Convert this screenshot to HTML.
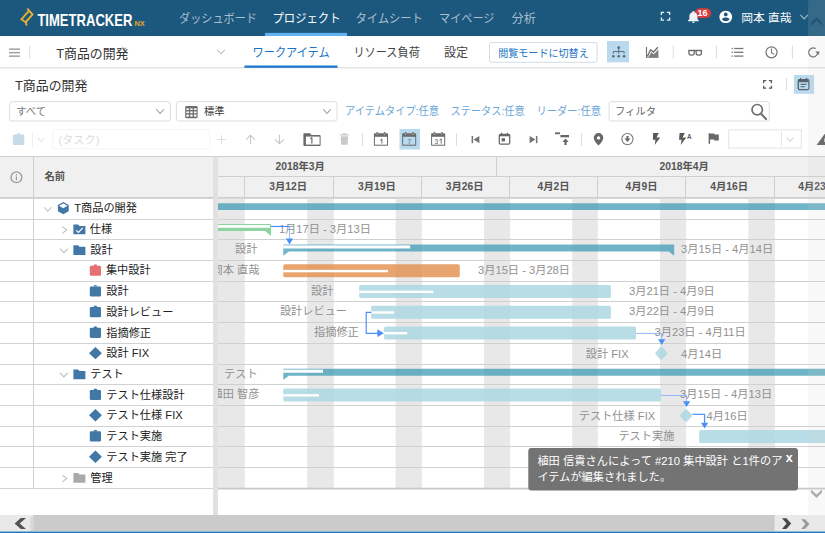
<!DOCTYPE html>
<html lang="ja"><head><meta charset="utf-8"><title>TimeTracker NX</title>
<style>
html,body{margin:0;padding:0;background:#fff;overflow:hidden}
body{width:825px;height:533px;position:relative;font-family:"Liberation Sans",sans-serif}
.t{position:absolute;white-space:nowrap;color:transparent;line-height:1;font-family:"Liberation Sans",sans-serif;pointer-events:none}
#nav{position:absolute;left:0;top:0;width:825px;height:36px;background:#1c587d}
svg.ov{position:absolute;left:0;top:0}
svg.ov text{font-family:"Liberation Sans","Noto Sans CJK JP",sans-serif;white-space:pre}
</style></head><body>
<header id="nav"><span class="t" style="left:37.4px;top:11.4px;font-size:17.1px">TIMETRACKER</span><span class="t" style="left:134.6px;top:19.8px;font-size:7.4px">NX</span><span class="t" style="left:179.5px;top:11.8px;font-size:12.1px">ダッシュボード</span><span class="t" style="left:273.8px;top:11.8px;font-size:12.1px">プロジェクト</span><span class="t" style="left:356.2px;top:11.8px;font-size:12.1px">タイムシート</span><span class="t" style="left:440.0px;top:11.8px;font-size:12.1px">マイページ</span><span class="t" style="left:511.8px;top:11.8px;font-size:12.1px">分析</span><span class="t" style="left:742.0px;top:11.8px;font-size:11.8px">岡本 直哉</span><span class="t" style="left:697.7px;top:8.5px;font-size:9.0px">16</span></header>
<nav id="subnav"><span class="t" style="left:56.2px;top:46.3px;font-size:12.9px">T商品の開発</span><span class="t" style="left:253.8px;top:46.7px;font-size:12.1px">ワークアイテム</span><span class="t" style="left:354.8px;top:46.7px;font-size:12.1px">リソース負荷</span><span class="t" style="left:444.0px;top:46.7px;font-size:12.1px">設定</span><span class="t" style="left:498.8px;top:47.5px;font-size:10.3px">閲覧モードに切替え</span></nav>
<section id="toolbar"><span class="t" style="left:15.0px;top:78.5px;font-size:12.9px">T商品の開発</span><span class="t" style="left:16.2px;top:106.1px;font-size:10.3px">すべて</span><span class="t" style="left:204.0px;top:106.1px;font-size:10.3px">標準</span><span class="t" style="left:345.8px;top:105.6px;font-size:10.9px">アイテムタイプ:任意</span><span class="t" style="left:451.2px;top:105.6px;font-size:10.9px">ステータス:任意</span><span class="t" style="left:537.5px;top:105.6px;font-size:10.9px">リーダー:任意</span><span class="t" style="left:615.5px;top:106.1px;font-size:10.3px">フィルタ</span><span class="t" style="left:58.8px;top:133.7px;font-size:11.2px">(タスク)</span><span class="t" style="left:407.6px;top:137.9px;font-size:6.6px">7</span><span class="t" style="left:434.6px;top:137.9px;font-size:6.6px">3</span><span class="t" style="left:687.1px;top:133.0px;font-size:6.4px">A</span></section>
<section id="gridhead"><span class="t" style="left:44.4px;top:170.8px;font-size:10.3px">名前</span><span class="t" style="left:275.5px;top:161.0px;font-size:10.3px">2018年3月</span><span class="t" style="left:659.5px;top:160.8px;font-size:10.3px">2018年4月</span><span class="t" style="left:269.2px;top:180.8px;font-size:10.3px">3月12日</span><span class="t" style="left:358.0px;top:180.8px;font-size:10.3px">3月19日</span><span class="t" style="left:445.8px;top:180.8px;font-size:10.3px">3月26日</span><span class="t" style="left:537.5px;top:180.8px;font-size:10.3px">4月2日</span><span class="t" style="left:625.6px;top:180.8px;font-size:10.3px">4月9日</span><span class="t" style="left:710.3px;top:180.8px;font-size:10.3px">4月16日</span><span class="t" style="left:798.2px;top:180.8px;font-size:10.3px">4月23日</span></section>
<section id="tree"><span class="t" style="left:74.2px;top:202.5px;font-size:11.2px">T商品の開発</span><span class="t" style="left:89.8px;top:223.2px;font-size:11.2px">仕様</span><span class="t" style="left:90.2px;top:243.9px;font-size:11.2px">設計</span><span class="t" style="left:105.9px;top:264.6px;font-size:11.2px">集中設計</span><span class="t" style="left:106.3px;top:285.3px;font-size:11.2px">設計</span><span class="t" style="left:106.3px;top:306.0px;font-size:11.2px">設計レビュー</span><span class="t" style="left:106.3px;top:326.7px;font-size:11.2px">指摘修正</span><span class="t" style="left:106.3px;top:347.4px;font-size:11.2px">設計 FIX</span><span class="t" style="left:90.2px;top:368.1px;font-size:11.2px">テスト</span><span class="t" style="left:106.3px;top:388.8px;font-size:11.2px">テスト仕様設計</span><span class="t" style="left:106.3px;top:409.6px;font-size:11.2px">テスト仕様 FIX</span><span class="t" style="left:106.3px;top:430.3px;font-size:11.2px">テスト実施</span><span class="t" style="left:106.3px;top:451.0px;font-size:11.2px">テスト実施 完了</span><span class="t" style="left:90.2px;top:471.7px;font-size:11.2px">管理</span></section>
<main id="gantt"><span class="t" style="left:278.9px;top:222.8px;font-size:11.2px">1月17日 - 3月13日</span><span class="t" style="left:235.1px;top:243.5px;font-size:11.2px">設計</span><span class="t" style="left:681.1px;top:243.5px;font-size:11.2px">3月15日 - 4月14日</span><span class="t" style="left:211.6px;top:264.2px;font-size:11.2px">岡本 直哉</span><span class="t" style="left:478.0px;top:264.2px;font-size:11.2px">3月15日 - 3月28日</span><span class="t" style="left:311.0px;top:284.9px;font-size:11.2px">設計</span><span class="t" style="left:629.0px;top:284.9px;font-size:11.2px">3月21日 - 4月9日</span><span class="t" style="left:279.9px;top:305.6px;font-size:11.2px">設計レビュー</span><span class="t" style="left:629.0px;top:305.6px;font-size:11.2px">3月22日 - 4月9日</span><span class="t" style="left:314.0px;top:326.3px;font-size:11.2px">指摘修正</span><span class="t" style="left:654.5px;top:326.3px;font-size:11.2px">3月23日 - 4月11日</span><span class="t" style="left:585.8px;top:348.0px;font-size:11.2px">設計 FIX</span><span class="t" style="left:681.1px;top:348.0px;font-size:11.2px">4月14日</span><span class="t" style="left:224.0px;top:367.7px;font-size:11.2px">テスト</span><span class="t" style="left:211.6px;top:388.4px;font-size:11.2px">植田 智彦</span><span class="t" style="left:680.1px;top:388.4px;font-size:11.2px">3月15日 - 4月13日</span><span class="t" style="left:578.8px;top:410.2px;font-size:11.2px">テスト仕様 FIX</span><span class="t" style="left:706.6px;top:410.2px;font-size:11.2px">4月16日</span><span class="t" style="left:618.4px;top:429.9px;font-size:11.2px">テスト実施</span></main>
<aside id="toast"><span class="t" style="left:537.4px;top:455.2px;font-size:11.2px">植田 信貴さんによって #210 集中設計 と1件のア</span><span class="t" style="left:537.4px;top:470.7px;font-size:11.2px">イテムが編集されました。</span><span class="t" style="left:785.7px;top:450.7px;font-size:12.6px">x</span></aside>

<svg class="ov" width="825" height="533" viewBox="0 0 825 533">
<rect x="0.00" y="0.00" width="825.00" height="36.00" fill="#1c587d"/>
<rect x="265.00" y="32.90" width="82.00" height="3.10" fill="#62b3f3"/>
<text x="37.4" y="26" font-size="17.1" font-weight="bold" fill="#fff" textLength="95" lengthAdjust="spacingAndGlyphs">TIMETRACKER</text>
<text x="134.4" y="26" font-size="7.4" font-weight="bold" fill="#e3a62f">NX</text>
<text x="179" y="22.5" font-size="12.1" fill="#a9bfce" textLength="78" lengthAdjust="spacingAndGlyphs">ダッシュボード</text>
<text x="272.5" y="22.5" font-size="12.1" fill="#fff" textLength="68" lengthAdjust="spacingAndGlyphs">プロジェクト</text>
<text x="355.4" y="22.5" font-size="12.1" fill="#a9bfce" textLength="67.5" lengthAdjust="spacingAndGlyphs">タイムシート</text>
<text x="439" y="22.5" font-size="12.1" fill="#a9bfce" textLength="55.5" lengthAdjust="spacingAndGlyphs">マイページ</text>
<text x="511.6" y="22.5" font-size="12.1" fill="#a9bfce">分析</text>
<text x="741.2" y="22.18" font-size="11.8" fill="#fff">岡本 直哉</text>
<rect x="694.7" y="8.3" width="16.5" height="9.6" rx="4.8" fill="#d63c3f"/>
<text x="697.6" y="16.42" font-size="9" font-weight="bold" fill="#fff">16</text>
<rect x="0.00" y="36.00" width="825.00" height="32.00" fill="#fff"/>
<rect x="0.00" y="67.00" width="825.00" height="1.00" fill="#e2e2e2"/>
<rect x="0.00" y="68.00" width="825.00" height="1.00" fill="#f3f3f3"/>
<rect x="9.00" y="48.40" width="11.00" height="1.50" fill="#a2a2a2"/>
<rect x="9.00" y="51.90" width="11.00" height="1.50" fill="#a2a2a2"/>
<rect x="9.00" y="55.40" width="11.00" height="1.50" fill="#a2a2a2"/>
<rect x="29.20" y="46.00" width="1.00" height="13.00" fill="#dcdcdc"/>
<text x="56.2" y="57.65" font-size="12.9" fill="#333">T商品の開発</text>
<text x="252.6" y="57.35" font-size="12.1" fill="#1a73c4" textLength="77" lengthAdjust="spacingAndGlyphs">ワークアイテム</text>
<rect x="244.40" y="65.50" width="93.10" height="2.30" fill="#1b78cd"/>
<text x="353.4" y="57.35" font-size="12.1" fill="#444" textLength="66.5" lengthAdjust="spacingAndGlyphs">リソース負荷</text>
<text x="444" y="57.35" font-size="12.1" fill="#444">設定</text>
<rect x="489.50" y="42.50" width="107.60" height="19.80" rx="2" fill="#fff" stroke="#d0dce7" stroke-width="1"/>
<text x="498.2" y="56.51" font-size="10.3" fill="#1a73c4" textLength="90.5" lengthAdjust="spacingAndGlyphs">閲覧モードに切替え</text>
<rect x="607.00" y="41.00" width="22.00" height="21.40" fill="#b9d9ef"/>
<rect x="672.80" y="45.70" width="1.00" height="12.80" fill="#dcdcdc"/>
<rect x="716.00" y="45.70" width="1.00" height="12.80" fill="#dcdcdc"/>
<rect x="791.90" y="45.70" width="1.00" height="12.80" fill="#dcdcdc"/>
<text x="15" y="89.9" font-size="12.9" fill="#333">T商品の開発</text>
<rect x="786.00" y="78.10" width="1.00" height="12.40" fill="#dcdcdc"/>
<rect x="794.00" y="75.00" width="20.10" height="18.80" fill="#b9d9ef"/>
<rect x="9.70" y="101.70" width="160.60" height="19.30" rx="2.2" fill="#fff" stroke="#dddddd" stroke-width="1"/>
<text x="16.2" y="115.21" font-size="10.3" fill="#777">すべて</text>
<rect x="176.40" y="101.70" width="160.60" height="19.30" rx="2.2" fill="#fff" stroke="#dddddd" stroke-width="1"/>
<text x="204" y="115.21" font-size="10.3" fill="#333">標準</text>
<text x="345" y="115.24" font-size="10.9" fill="#6ba6d6" textLength="94" lengthAdjust="spacingAndGlyphs">アイテムタイプ:任意</text>
<text x="450.6" y="115.24" font-size="10.9" fill="#6ba6d6" textLength="74" lengthAdjust="spacingAndGlyphs">ステータス:任意</text>
<text x="536.5" y="115.24" font-size="10.9" fill="#6ba6d6" textLength="64.5" lengthAdjust="spacingAndGlyphs">リーダー:任意</text>
<rect x="609.10" y="101.70" width="160.20" height="19.30" rx="2.2" fill="#fff" stroke="#dddddd" stroke-width="1"/>
<text x="615" y="115.21" font-size="10.3" fill="#666">フィルタ</text>
<rect x="32.00" y="132.00" width="1.00" height="15.00" fill="#f0f0f0"/>
<rect x="52.70" y="129.40" width="157.20" height="19.40" rx="1" fill="#fff" stroke="#f4f4f4" stroke-width="1"/>
<text x="58.4" y="143.56" font-size="11.2" fill="#dcdcdc">(タスク)</text>
<rect x="362.00" y="133.00" width="1.00" height="12.75" fill="#dcdcdc"/>
<rect x="399.50" y="129.00" width="20.50" height="20.50" fill="#b9d9ef"/>
<rect x="456.00" y="133.00" width="1.00" height="12.75" fill="#dcdcdc"/>
<rect x="581.00" y="133.00" width="1.00" height="12.75" fill="#dcdcdc"/>
<rect x="728.70" y="129.80" width="72.60" height="18.30" rx="0" fill="#fff" stroke="#e4e4e4" stroke-width="1"/>
<rect x="781.10" y="131.20" width="0.90" height="15.00" fill="#e4e4e4"/>
<rect x="0.00" y="156.00" width="825.00" height="42.40" fill="#f0f0f0"/>
<rect x="0.00" y="156.00" width="825.00" height="1.00" fill="#cfcfcf"/>
<rect x="0.00" y="197.00" width="825.00" height="1.80" fill="#cdcdcd"/>
<rect x="218.00" y="176.00" width="607.00" height="1.00" fill="#cfcfcf"/>
<rect x="496.00" y="156.00" width="1.00" height="20.50" fill="#cfcfcf"/>
<rect x="244.00" y="176.50" width="1.00" height="21.00" fill="#cfcfcf"/>
<rect x="333.00" y="176.50" width="1.00" height="21.00" fill="#cfcfcf"/>
<rect x="421.00" y="176.50" width="1.00" height="21.00" fill="#cfcfcf"/>
<rect x="509.00" y="176.50" width="1.00" height="21.00" fill="#cfcfcf"/>
<rect x="597.00" y="176.50" width="1.00" height="21.00" fill="#cfcfcf"/>
<rect x="685.00" y="176.50" width="1.00" height="21.00" fill="#cfcfcf"/>
<rect x="774.00" y="176.50" width="1.00" height="21.00" fill="#cfcfcf"/>
<text x="44.4" y="179.91" font-size="10.3" font-weight="bold" fill="#555">名前</text>
<text x="275.5" y="170.11" font-size="10.3" font-weight="bold" fill="#555">2018年3月</text>
<text x="659.5" y="169.91" font-size="10.3" font-weight="bold" fill="#555">2018年4月</text>
<text x="269.2" y="189.81" font-size="10.3" font-weight="bold" fill="#555">3月12日</text>
<text x="358" y="189.81" font-size="10.3" font-weight="bold" fill="#555">3月19日</text>
<text x="445.8" y="189.81" font-size="10.3" font-weight="bold" fill="#555">3月26日</text>
<text x="537.5" y="189.81" font-size="10.3" font-weight="bold" fill="#555">4月2日</text>
<text x="625.6" y="189.81" font-size="10.3" font-weight="bold" fill="#555">4月9日</text>
<text x="710.3" y="189.81" font-size="10.3" font-weight="bold" fill="#555">4月16日</text>
<text x="798.2" y="189.81" font-size="10.3" font-weight="bold" fill="#555">4月23日</text>
<rect x="218.00" y="198.80" width="26.80" height="289.70" fill="#e8e8e8"/>
<rect x="307.20" y="198.80" width="26.60" height="289.70" fill="#e8e8e8"/>
<rect x="395.60" y="198.80" width="26.30" height="289.70" fill="#e8e8e8"/>
<rect x="483.90" y="198.80" width="26.10" height="289.70" fill="#e8e8e8"/>
<rect x="572.20" y="198.80" width="25.70" height="289.70" fill="#e8e8e8"/>
<rect x="660.10" y="198.80" width="25.90" height="289.70" fill="#e8e8e8"/>
<rect x="748.40" y="198.80" width="26.50" height="289.70" fill="#e8e8e8"/>
<rect x="0.00" y="219.00" width="213.00" height="1.00" fill="#d2d2d2"/>
<rect x="218.00" y="219.00" width="607.00" height="1.00" fill="#d0d0d0"/>
<rect x="0.00" y="239.00" width="213.00" height="1.00" fill="#d2d2d2"/>
<rect x="218.00" y="239.00" width="607.00" height="1.00" fill="#d0d0d0"/>
<rect x="0.00" y="260.00" width="213.00" height="1.00" fill="#d2d2d2"/>
<rect x="218.00" y="260.00" width="607.00" height="1.00" fill="#d0d0d0"/>
<rect x="0.00" y="281.00" width="213.00" height="1.00" fill="#d2d2d2"/>
<rect x="218.00" y="281.00" width="607.00" height="1.00" fill="#d0d0d0"/>
<rect x="0.00" y="301.00" width="213.00" height="1.00" fill="#d2d2d2"/>
<rect x="218.00" y="301.00" width="607.00" height="1.00" fill="#d0d0d0"/>
<rect x="0.00" y="322.00" width="213.00" height="1.00" fill="#d2d2d2"/>
<rect x="218.00" y="322.00" width="607.00" height="1.00" fill="#d0d0d0"/>
<rect x="0.00" y="343.00" width="213.00" height="1.00" fill="#d2d2d2"/>
<rect x="218.00" y="343.00" width="607.00" height="1.00" fill="#d0d0d0"/>
<rect x="0.00" y="364.00" width="213.00" height="1.00" fill="#d2d2d2"/>
<rect x="218.00" y="364.00" width="607.00" height="1.00" fill="#d0d0d0"/>
<rect x="0.00" y="384.00" width="213.00" height="1.00" fill="#d2d2d2"/>
<rect x="218.00" y="384.00" width="607.00" height="1.00" fill="#d0d0d0"/>
<rect x="0.00" y="405.00" width="213.00" height="1.00" fill="#d2d2d2"/>
<rect x="218.00" y="405.00" width="607.00" height="1.00" fill="#d0d0d0"/>
<rect x="0.00" y="426.00" width="213.00" height="1.00" fill="#d2d2d2"/>
<rect x="218.00" y="426.00" width="607.00" height="1.00" fill="#d0d0d0"/>
<rect x="0.00" y="446.00" width="213.00" height="1.00" fill="#d2d2d2"/>
<rect x="218.00" y="446.00" width="607.00" height="1.00" fill="#d0d0d0"/>
<rect x="0.00" y="467.00" width="213.00" height="1.00" fill="#d2d2d2"/>
<rect x="218.00" y="467.00" width="607.00" height="1.00" fill="#d0d0d0"/>
<rect x="0.00" y="488.00" width="213.00" height="1.00" fill="#d2d2d2"/>
<rect x="218.00" y="487.70" width="607.00" height="1.80" fill="#c9c9c9"/>
<rect x="33.00" y="156.00" width="1.00" height="332.50" fill="#d0d0d0"/>
<rect x="213.00" y="156.50" width="5.00" height="358.50" fill="#e1e1e1"/>
<text x="74.2" y="212.32" font-size="11.2" fill="#222">T商品の開発</text>
<text x="89.8" y="233.03" font-size="11.2" fill="#222">仕様</text>
<text x="90.2" y="253.74" font-size="11.2" fill="#222">設計</text>
<text x="105.9" y="274.45" font-size="11.2" fill="#222">集中設計</text>
<text x="106.3" y="295.16" font-size="11.2" fill="#222">設計</text>
<text x="106.3" y="315.87" font-size="11.2" fill="#222">設計レビュー</text>
<text x="106.3" y="336.58" font-size="11.2" fill="#222">指摘修正</text>
<text x="106.3" y="357.29" font-size="11.2" fill="#222">設計 FIX</text>
<text x="90.2" y="378" font-size="11.2" fill="#222">テスト</text>
<text x="106.3" y="398.71" font-size="11.2" fill="#222">テスト仕様設計</text>
<text x="106.3" y="419.42" font-size="11.2" fill="#222">テスト仕様 FIX</text>
<text x="106.3" y="440.13" font-size="11.2" fill="#222">テスト実施</text>
<text x="106.3" y="460.84" font-size="11.2" fill="#222">テスト実施 完了</text>
<text x="90.2" y="481.55" font-size="11.2" fill="#222">管理</text>
<clipPath id="gc"><rect x="218" y="198" width="607" height="292"/></clipPath><g clip-path="url(#gc)">
<path d="M218.00 203.16H825.00V209.96H218.00Z" fill="rgba(64,156,180,0.75)" />
<path d="M218 223.97H271V235.97L265 230.97H218Z" fill="#8fd3a0"/>
<rect x="218.00" y="225.07" width="52.00" height="2.70" fill="#fff" />
<text x="278.9" y="232.63" font-size="11.2" fill="#919191">1月17日 - 3月13日</text>
<text x="235.1" y="253.34" font-size="11.2" fill="#919191">設計</text>
<path d="M283.30 244.58H674.20V255.78L668.60 251.38H288.90L283.30 255.78Z" fill="rgba(64,156,180,0.75)" />
<rect x="283.20" y="245.38" width="127.00" height="3.10" fill="#fff" />
<text x="681.1" y="253.34" font-size="11.2" fill="#919191">3月15日 - 4月14日</text>
<text x="211.6" y="274.05" font-size="11.2" fill="#919191">岡本 直哉</text>
<rect x="283.30" y="264.29" width="176.50" height="13.00" fill="rgba(226,140,72,0.78)" rx="1.5" />
<rect x="283.30" y="269.89" width="104.70" height="2.40" fill="#fff" />
<text x="478" y="274.05" font-size="11.2" fill="#919191">3月15日 - 3月28日</text>
<text x="311" y="294.76" font-size="11.2" fill="#919191">設計</text>
<rect x="359.20" y="285.00" width="251.70" height="13.00" fill="rgba(173,215,226,0.85)" rx="1.5" />
<rect x="359.20" y="290.60" width="74.10" height="2.40" fill="#fff" />
<text x="629" y="294.76" font-size="11.2" fill="#919191">3月21日 - 4月9日</text>
<text x="279.9" y="315.47" font-size="11.2" fill="#919191">設計レビュー</text>
<rect x="371.10" y="305.71" width="239.80" height="13.00" fill="rgba(173,215,226,0.85)" rx="1.5" />
<rect x="371.10" y="311.31" width="23.10" height="2.40" fill="#fff" />
<text x="629" y="315.47" font-size="11.2" fill="#919191">3月22日 - 4月9日</text>
<text x="314" y="336.18" font-size="11.2" fill="#919191">指摘修正</text>
<rect x="384.10" y="326.42" width="251.90" height="13.00" fill="rgba(173,215,226,0.85)" rx="1.5" />
<rect x="384.10" y="332.02" width="23.10" height="2.40" fill="#fff" />
<text x="654.5" y="336.18" font-size="11.2" fill="#919191">3月23日 - 4月11日</text>
<text x="585.8" y="357.89" font-size="11.2" fill="#919191">設計 FIX</text>
<rect x="-4.9" y="-4.9" width="9.8" height="9.8" rx="1.5" fill="rgba(173,215,226,0.85)" transform="translate(661.30,353.33) scale(0.95,1.02) rotate(45)"/>
<text x="681.1" y="357.89" font-size="11.2" fill="#919191">4月14日</text>
<text x="224" y="377.6" font-size="11.2" fill="#919191">テスト</text>
<path d="M283.30 368.84H825.00V375.64H288.90L283.30 380.04Z" fill="rgba(64,156,180,0.75)" />
<rect x="283.20" y="369.64" width="39.80" height="3.10" fill="#fff" />
<text x="211.6" y="398.31" font-size="11.2" fill="#919191">植田 智彦</text>
<rect x="283.30" y="388.55" width="377.70" height="13.00" fill="rgba(173,215,226,0.85)" rx="1.5" />
<rect x="283.30" y="394.15" width="35.70" height="2.40" fill="#fff" />
<text x="680.1" y="398.31" font-size="11.2" fill="#919191">3月15日 - 4月13日</text>
<text x="578.8" y="420.02" font-size="11.2" fill="#919191">テスト仕様 FIX</text>
<rect x="-4.9" y="-4.9" width="9.8" height="9.8" rx="1.5" fill="rgba(173,215,226,0.85)" transform="translate(686.10,415.46) scale(0.95,1.02) rotate(45)"/>
<text x="706.6" y="420.02" font-size="11.2" fill="#919191">4月16日</text>
<text x="618.4" y="439.73" font-size="11.2" fill="#919191">テスト実施</text>
<rect x="699.20" y="429.97" width="130.80" height="13.00" fill="rgba(173,215,226,0.85)" rx="1.5" />
<path d="M271 226.47H289.8" fill="none" stroke="#4d8ffa" stroke-width="1.2"/>
<path d="M289.6 226.47V239.78" fill="none" stroke="#85b1fb" stroke-width="0.9"/>
<path d="M289.50 244.38l-3.6 -5.8h7.2Z" fill="#4d8ffa" />
<path d="M371.5 312.41H366.2V333.42H378" fill="none" stroke="#4d8ffa" stroke-width="1.2"/>
<path d="M383.80 333.22l-6.4 -3.9v7.8Z" fill="#4d8ffa" />
<path d="M636 333.42H661.6V340.33" fill="none" stroke="#85b1fb" stroke-width="0.9"/>
<path d="M661.70 345.03l-3.6 -5.8h7.2Z" fill="#4d8ffa" />
<path d="M661 395.45H686.6V402.46" fill="none" stroke="#85b1fb" stroke-width="0.9"/>
<path d="M686.60 406.96l-3.6 -5.8h7.2Z" fill="#4d8ffa" />
<path d="M692.3 414.36H704.6V424.17" fill="none" stroke="#5895fb" stroke-width="1.4"/>
<path d="M704.60 428.47l-3.6 -5.8h7.2Z" fill="#4d8ffa" />
</g>
<rect x="528.30" y="448.00" width="269.70" height="42.60" fill="#737373" rx="3" />
<text x="537.4" y="465.06" font-size="11.2" fill="#fff" textLength="245" lengthAdjust="spacingAndGlyphs">植田 信貴さんによって #210 集中設計 と1件のア</text>
<text x="537.4" y="480.56" font-size="11.2" fill="#fff">イテムが編集されました。</text>
<text x="785.7" y="461.79" font-size="12.6" font-weight="bold" fill="#fff">x</text>
<rect x="0.00" y="515.00" width="825.00" height="16.60" fill="#cbcbcb" />
<rect x="0.00" y="515.00" width="33.20" height="16.60" fill="#e9e9e9" />
<rect x="30.00" y="517.00" width="3.20" height="14.60" fill="#dadada" />
<rect x="774.60" y="515.00" width="50.40" height="16.60" fill="#e9e9e9" />
<rect x="0.00" y="531.60" width="825.00" height="1.40" fill="#1b78c4" />
<path d="M26 518.1L19.8 523.5L26 528.9H20.8L14.6 523.5L20.8 518.1Z" fill="#555" />
<path d="M782 518.3L786.6 523.6L782 528.9H786.4L791.2 523.6L786.4 518.3Z" fill="#4a4a4a" />
<path d="M801.2 519.3L805.4 524.1L801.2 528.9H805L809.4 524.1L805 519.3Z" fill="#9a9a9a" />
<path d="M27.3 8.6L32.5 14.6L25.9 21.9L26.5 25.6" fill="none" stroke="#ecb12c" stroke-width="1.9" stroke-linejoin="miter"/>
<path d="M28.5 11.4L21.4 19.4L26.0 22.6" fill="none" stroke="#ecb12c" stroke-width="1.8" stroke-linejoin="miter"/>
<g transform="translate(660.70,11.70) scale(0.6857,0.6500) translate(-5,-5)" fill="#e6edf2" ><path d="M7 14H5v5h5v-2H7v-3zm-2-4h2V7h3V5H5v5zm12 7h-3v2h5v-5h-2v3zM14 5v2h3v3h2V5h-5z"/></g>
<g transform="translate(688.00,11.00) scale(0.6750,0.6154) translate(-4,-2.5)" fill="#eef3f6" ><path d="M12 22c1.1 0 2-.9 2-2h-4c0 1.1.89 2 2 2zm6-6v-5c0-3.07-1.64-5.64-4.5-6.32V4c0-.83-.67-1.5-1.5-1.5s-1.5.67-1.5 1.5v.68C7.63 5.36 6 7.92 6 11v5l-2 2v1h16v-1l-2-2z"/></g>
<g transform="translate(719.40,10.70) scale(0.6350,0.6200) translate(-2,-2)" fill="#fff" ><path d="M12 2C6.48 2 2 6.48 2 12s4.48 10 10 10 10-4.48 10-10S17.52 2 12 2zm0 3c1.66 0 3 1.34 3 3s-1.34 3-3 3-3-1.34-3-3 1.34-3 3-3zm0 14.2c-2.5 0-4.71-1.28-6-3.22.03-1.99 4-3.08 6-3.08 1.99 0 5.97 1.09 6 3.08-1.29 1.94-3.5 3.22-6 3.22z"/></g>
<path d="M800.4 14.8L804.2 18.8L808 14.8" fill="none" stroke="#9fb6c6" stroke-width="1.2" />
<path d="M217.2 49.8L221 53.8L224.8 49.8" fill="none" stroke="#bdbdbd" stroke-width="1.1" />
<circle cx="618.7" cy="47.7" r="1.35" fill="#55697c"/>
<path d="M618.7 48.5V53.8 M613.3 53.8V51.5H624.1V53.8" fill="none" stroke="#55697c" stroke-width="0.9" />
<circle cx="613.3" cy="56.3" r="1.3" fill="#55697c"/>
<circle cx="618.7" cy="56.3" r="1.3" fill="#55697c"/>
<circle cx="624.1" cy="56.3" r="1.3" fill="#55697c"/>
<path d="M646.5 47.1V57.3H658.5" fill="none" stroke="#707070" stroke-width="1.1" />
<path d="M648.4 57.2L651.2 52.3L653.8 54.3L658.4 49.6V57.2Z" fill="#7e7e7e" />
<path d="M647.4 56.2L650.6 49.7L653.4 52.0L657.9 47.3" fill="none" stroke="#686868" stroke-width="1.3" />
<path d="M688.9 50.5H694.2V53.0a2.1 2.1 0 0 1-2.1 2.1h-1.1a2.1 2.1 0 0 1-2.1-2.1Z M696.1 50.5H701.4V53.0a2.1 2.1 0 0 1-2.1 2.1h-1.1a2.1 2.1 0 0 1-2.1-2.1Z M688.2 50.5H702.1" fill="none" stroke="#6c6c6c" stroke-width="1.3" />
<rect x="731.60" y="47.85" width="1.30" height="1.30" fill="#777" />
<rect x="734.20" y="47.85" width="9.20" height="1.30" fill="#777" />
<rect x="731.60" y="51.65" width="1.30" height="1.30" fill="#777" />
<rect x="734.20" y="51.65" width="9.20" height="1.30" fill="#777" />
<rect x="731.60" y="55.45" width="1.30" height="1.30" fill="#777" />
<rect x="734.20" y="55.45" width="9.20" height="1.30" fill="#777" />
<circle cx="771.5" cy="52.3" r="5.5" fill="none" stroke="#777" stroke-width="1.25"/>
<path d="M771.5 48.6V52.6L774 54.2" fill="none" stroke="#777" stroke-width="1.1" />
<path d="M817.6 53.2A4.5 4.5 0 1 1 815.6 48.6" fill="none" stroke="#6a6a6a" stroke-width="1.25" />
<path d="M815.2 51.6h4.4l-1.0 3.4Z" fill="#6a6a6a" />
<g transform="translate(763.00,80.00) scale(0.6500,0.6286) translate(-5,-5)" fill="#5a5a5a" ><path d="M7 14H5v5h5v-2H7v-3zm-2-4h2V7h3V5H5v5zm12 7h-3v2h5v-5h-2v3zM14 5v2h3v3h2V5h-5z"/></g>
<rect x="798.3" y="79.6" width="10.6" height="10" rx="1.4" fill="none" stroke="#56626c" stroke-width="1.3"/>
<rect x="798.30" y="79.40" width="10.60" height="2.80" fill="#56626c" />
<rect x="800.10" y="77.90" width="1.20" height="2.10" fill="#56626c" />
<rect x="805.90" y="77.90" width="1.20" height="2.10" fill="#56626c" />
<rect x="800.60" y="83.80" width="6.00" height="1.10" fill="#56626c" />
<rect x="800.60" y="86.20" width="4.20" height="1.00" fill="#56626c" />
<path d="M156.4 109.4L160.1 113.5L163.8 109.4" fill="none" stroke="#9e9e9e" stroke-width="1.1" />
<path d="M323.3 109.4L327 113.5L330.7 109.4" fill="none" stroke="#9e9e9e" stroke-width="1.1" />
<rect x="185.20" y="106.00" width="12.40" height="12.20" fill="#6e6e6e" rx="1.3" />
<rect x="186.40" y="108.40" width="2.50" height="1.60" fill="#fff" />
<rect x="186.40" y="111.40" width="2.50" height="1.80" fill="#fff" />
<rect x="186.40" y="114.60" width="2.50" height="2.00" fill="#fff" />
<rect x="190.20" y="108.40" width="2.40" height="1.60" fill="#fff" />
<rect x="190.20" y="111.40" width="2.40" height="1.80" fill="#fff" />
<rect x="190.20" y="114.60" width="2.40" height="2.00" fill="#fff" />
<rect x="193.90" y="108.40" width="2.60" height="1.60" fill="#fff" />
<rect x="193.90" y="111.40" width="2.60" height="1.80" fill="#fff" />
<rect x="193.90" y="114.60" width="2.60" height="2.00" fill="#fff" />
<circle cx="757.2" cy="109.7" r="5.2" fill="none" stroke="#707070" stroke-width="1.7"/>
<path d="M761.2 113.9L766 118.9" fill="none" stroke="#707070" stroke-width="2.1" stroke-linecap="round"/>
<path d="M14.20 134.50h8.80a1.3 1.3 0 0 1 1.3 1.3v7.90a1.3 1.3 0 0 1-1.3 1.3h-8.80a1.3 1.3 0 0 1-1.3-1.3v-7.90a1.3 1.3 0 0 1 1.3-1.3Z" fill="#c8dae8"/>
<path d="M16.70 134.70a1.9 1.7 0 0 1 3.8 0Z" fill="#c8dae8"/>
<path d="M37.8 138L41 141.4L44.2 138" fill="none" stroke="#e6e6e6" stroke-width="1.1" />
<path d="M221.5 135.2V143.8M217.2 139.5H225.8" fill="none" stroke="#dcdcdc" stroke-width="1.0" />
<path d="M250.5 144V135.4M246.2 139.6L250.5 135.2L254.8 139.6" fill="none" stroke="#c6c6c6" stroke-width="1.1" />
<path d="M279.4 134.8V143.6M275.1 139.4L279.4 143.8L283.7 139.4" fill="none" stroke="#c6c6c6" stroke-width="1.1" />
<path d="M304.4 133.3h5.6l1.6 1.7h8a1 1 0 0 1 1 1v9a1 1 0 0 1-1 1h-15.2a1 1 0 0 1-1-1v-10.7a1 1 0 0 1 1-1Z" fill="#6a6a6a"/>
<rect x="305.90" y="136.60" width="13.70" height="8.00" fill="#fff" />
<path d="M310.20 138.90L311.90 137.40V143.60" fill="none" stroke="#444" stroke-width="0.95" stroke-linejoin="miter"/>
<path d="M340.6 136.2h7.6l-0.6 8.6h-6.4Z M339.8 134.3h9.2v1.2h-9.2Z M342.6 133.3h3.6v1.2h-3.6Z" fill="#cacaca" />
<rect x="373.90" y="133.20" width="14.10" height="12.50" fill="#6c6c6c" rx="0.8" />
<rect x="374.90" y="136.80" width="12.10" height="7.90" fill="#fff" />
<rect x="376.50" y="132.00" width="1.60" height="2.60" fill="#6c6c6c" rx="0.6" />
<rect x="383.80" y="132.00" width="1.60" height="2.60" fill="#6c6c6c" rx="0.6" />
<circle cx="377.30" cy="134.1" r="0.55" fill="#ddd"/><circle cx="384.60" cy="134.1" r="0.55" fill="#ddd"/>
<path d="M380.20 140.40L381.90 138.90V143.60" fill="none" stroke="#666" stroke-width="0.95" stroke-linejoin="miter"/>
<rect x="402.10" y="133.20" width="14.10" height="12.50" fill="#6c6c6c" rx="0.8" />
<rect x="403.10" y="136.80" width="12.10" height="7.90" fill="#b9d9ef" />
<rect x="404.70" y="132.00" width="1.60" height="2.60" fill="#6c6c6c" rx="0.6" />
<rect x="412.00" y="132.00" width="1.60" height="2.60" fill="#6c6c6c" rx="0.6" />
<circle cx="405.50" cy="134.1" r="0.55" fill="#ddd"/><circle cx="412.80" cy="134.1" r="0.55" fill="#ddd"/>
<text x="407.4" y="143.71" font-size="6.6" fill="#5a6a78">7</text>
<rect x="431.10" y="133.20" width="14.10" height="12.50" fill="#6c6c6c" rx="0.8" />
<rect x="432.10" y="136.80" width="12.10" height="7.90" fill="#fff" />
<rect x="433.70" y="132.00" width="1.60" height="2.60" fill="#6c6c6c" rx="0.6" />
<rect x="441.00" y="132.00" width="1.60" height="2.60" fill="#6c6c6c" rx="0.6" />
<circle cx="434.50" cy="134.1" r="0.55" fill="#ddd"/><circle cx="441.80" cy="134.1" r="0.55" fill="#ddd"/>
<text x="434.5" y="143.71" font-size="6.6" fill="#666">3</text>
<path d="M439.50 140.40L441.20 138.90V143.60" fill="none" stroke="#666" stroke-width="0.95" stroke-linejoin="miter"/>
<rect x="471.60" y="136.00" width="1.50" height="7.20" fill="#747474" />
<path d="M479.4 136V143.2L473.6 139.6Z" fill="#747474" />
<rect x="535.90" y="136.00" width="1.50" height="7.20" fill="#747474" />
<path d="M529.6 136V143.2L535.4 139.6Z" fill="#747474" />
<rect x="499.3" y="134.3" width="10.4" height="9.9" rx="1.2" fill="none" stroke="#666" stroke-width="1.25"/>
<rect x="499.30" y="134.00" width="10.40" height="2.30" fill="#666" />
<rect x="501.00" y="132.70" width="1.20" height="1.90" fill="#666" />
<rect x="506.80" y="132.70" width="1.20" height="1.90" fill="#666" />
<rect x="501.60" y="138.20" width="3.40" height="3.20" fill="#666" />
<rect x="555.00" y="132.40" width="5.00" height="1.80" fill="#666" />
<rect x="560.40" y="135.00" width="8.60" height="2.30" fill="#666" />
<path d="M565.5 138.6L568.6 142H566.6V145H564.4V142H562.4Z" fill="#666" />
<path d="M598.55 133.1a4.75 4.75 0 0 0 -4.75 4.75c0 3.5 4.75 7.7 4.75 7.7s4.75-4.2 4.75-7.7a4.75 4.75 0 0 0 -4.75-4.75Zm0 3.1a1.7 1.7 0 1 1 0 3.4a1.7 1.7 0 0 1 0-3.4Z" fill="#686868" fill-rule="evenodd"/>
<circle cx="627.45" cy="139.1" r="5.6" fill="none" stroke="#7a7a7a" stroke-width="1.15"/>
<path d="M626.4 136h2.1v2.6h2l-3.05 3.3l-3.05-3.3h2Z" fill="#6a6a6a" />
<path d="M653.10 133.1h5.6l-2.2 4.4h3.7l-5.6 7.6l0.9-5.4h-2.6Z" fill="#5a5a5a" />
<path d="M679.60 133.1h5.2l-2.2 4.4h3.7l-5.6 7.6l0.9-5.4h-2.6Z" fill="#5a5a5a" />
<text x="687.1" y="138.63" font-size="6.4" font-weight="bold" fill="#5a5a5a">A</text>
<path d="M708.6 133.2h1.5v10.6h-1.5Z M710.1 133.6h4l0.5 0.9h4.2v6h-4.6l-0.5-0.9h-3.6Z" fill="#686868" />
<path d="M786.6 137.6L790.1 141.2L793.6 137.6" fill="none" stroke="#d8d8d8" stroke-width="1.1" />
<path d="M825.3 133.2L834 144.9H816.6Z" fill="#5c5c5c" />
<rect x="824.20" y="138.40" width="1.20" height="3.60" fill="#ddd" />
<circle cx="16.4" cy="177.3" r="5.4" fill="none" stroke="#999" stroke-width="1.3"/>
<rect x="15.80" y="176.40" width="1.20" height="3.90" fill="#999" />
<rect x="15.80" y="174.20" width="1.20" height="1.30" fill="#999" />
<path d="M44.20 207.26L47.80 211.26L51.40 207.26" fill="none" stroke="#bdbdbd" stroke-width="1.05" />
<path d="M63.3 202.06L68.7 205.06V211.16L63.3 214.26L57.9 211.16V205.06Z" fill="#4178a8" />
<path d="M63.3 203.46L67.5 205.86L63.3 208.26L59.1 205.86Z" fill="#fff" />
<path d="M62.40 226.57L66.70 229.97L62.40 233.37" fill="none" stroke="#bdbdbd" stroke-width="1.05" />
<path d="M73.4 224.47h4.6l1.5 1.6h5.9v8.1h-12Z" fill="#4178a8" />
<path d="M76.2 230.37L78.5 232.47L82.8 227.97" fill="none" stroke="#fff" stroke-width="1.15" />
<path d="M60.00 248.68L63.85 252.68L67.70 248.68" fill="none" stroke="#bdbdbd" stroke-width="1.05" />
<path d="M73.4 245.18h4.6l1.5 1.6h5.9v8.1h-12Z" fill="#4178a8" />
<path d="M91.10 265.69h8.60a1.3 1.3 0 0 1 1.3 1.3v7.50a1.3 1.3 0 0 1-1.3 1.3h-8.60a1.3 1.3 0 0 1-1.3-1.3v-7.50a1.3 1.3 0 0 1 1.3-1.3Z" fill="#e57072"/>
<path d="M93.50 265.89a1.9 1.7 0 0 1 3.8 0Z" fill="#e57072"/>
<path d="M91.10 286.40h8.60a1.3 1.3 0 0 1 1.3 1.3v7.50a1.3 1.3 0 0 1-1.3 1.3h-8.60a1.3 1.3 0 0 1-1.3-1.3v-7.50a1.3 1.3 0 0 1 1.3-1.3Z" fill="#4278a6"/>
<path d="M93.50 286.60a1.9 1.7 0 0 1 3.8 0Z" fill="#4278a6"/>
<path d="M91.10 307.11h8.60a1.3 1.3 0 0 1 1.3 1.3v7.50a1.3 1.3 0 0 1-1.3 1.3h-8.60a1.3 1.3 0 0 1-1.3-1.3v-7.50a1.3 1.3 0 0 1 1.3-1.3Z" fill="#4278a6"/>
<path d="M93.50 307.31a1.9 1.7 0 0 1 3.8 0Z" fill="#4278a6"/>
<path d="M91.10 327.82h8.60a1.3 1.3 0 0 1 1.3 1.3v7.50a1.3 1.3 0 0 1-1.3 1.3h-8.60a1.3 1.3 0 0 1-1.3-1.3v-7.50a1.3 1.3 0 0 1 1.3-1.3Z" fill="#4278a6"/>
<path d="M93.50 328.02a1.9 1.7 0 0 1 3.8 0Z" fill="#4278a6"/>
<path d="M91.10 389.95h8.60a1.3 1.3 0 0 1 1.3 1.3v7.50a1.3 1.3 0 0 1-1.3 1.3h-8.60a1.3 1.3 0 0 1-1.3-1.3v-7.50a1.3 1.3 0 0 1 1.3-1.3Z" fill="#4278a6"/>
<path d="M93.50 390.15a1.9 1.7 0 0 1 3.8 0Z" fill="#4278a6"/>
<path d="M91.10 431.37h8.60a1.3 1.3 0 0 1 1.3 1.3v7.50a1.3 1.3 0 0 1-1.3 1.3h-8.60a1.3 1.3 0 0 1-1.3-1.3v-7.50a1.3 1.3 0 0 1 1.3-1.3Z" fill="#4278a6"/>
<path d="M93.50 431.57a1.9 1.7 0 0 1 3.8 0Z" fill="#4278a6"/>
<path d="M95.45 346.93L101.9 353.13L95.45 359.33L89 353.13Z" fill="#4278a6" />
<path d="M95.45 409.06L101.9 415.26L95.45 421.46L89 415.26Z" fill="#4278a6" />
<path d="M95.45 450.48L101.9 456.68L95.45 462.88L89 456.68Z" fill="#4278a6" />
<path d="M60.00 372.94L63.85 376.94L67.70 372.94" fill="none" stroke="#bdbdbd" stroke-width="1.05" />
<path d="M73.4 369.44h4.6l1.5 1.6h5.9v8.1h-12Z" fill="#4178a8" />
<path d="M62.40 475.09L66.70 478.49L62.40 481.89" fill="none" stroke="#bdbdbd" stroke-width="1.05" />
<path d="M73.4 472.99h4.6l1.5 1.6h5.9v8.1h-12Z" fill="#a9a9a9" />
<rect x="808.20" y="0.00" width="16.80" height="515.00" fill="rgba(207,207,207,0.145)" />
<path d="M811 25.9V22.4L816.6 16.9L822.2 22.4V25.9L816.6 20.5Z" fill="#25557a" />
<path d="M811 489.4V492.4L816.5 497.9L822 492.4V489.4L816.5 494.6Z" fill="#ababab" />
</svg>
</body></html>
